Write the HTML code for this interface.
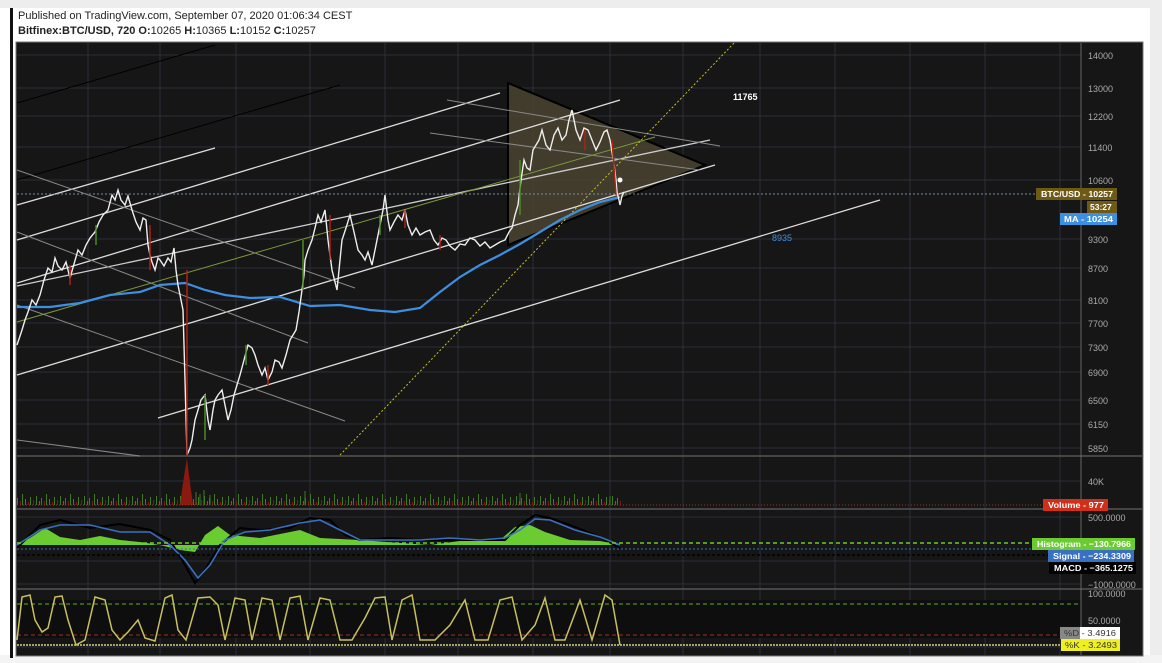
<!DOCTYPE html>
<html><head><meta charset="utf-8"><style>
html,body{margin:0;padding:0;background:#fff;width:1162px;height:663px;overflow:hidden;font-family:"Liberation Sans",sans-serif}
.h{position:absolute;left:18px;font-size:11px;color:#222}
</style></head><body>
<div style="position:absolute;left:0;top:0;width:1162px;height:8px;background:#ededed"></div>
<div style="position:absolute;left:1150px;top:0;width:12px;height:663px;background:#ededed"></div>
<div style="position:absolute;left:0;top:655px;width:1162px;height:8px;background:#f4f4f4"></div>
<div style="position:absolute;left:10px;top:8px;width:3px;height:650px;background:#111"></div>
<div class="h" style="top:10px">Published on TradingView.com, September 07, 2020 01:06:34 CEST</div>
<div class="h" style="top:25px;font-weight:bold">Bitfinex:BTC/USD, 720 <span>O:</span><span style="font-weight:normal">10265</span> H:<span style="font-weight:normal">10365</span> L:<span style="font-weight:normal">10152</span> C:<span style="font-weight:normal">10257</span></div>
<svg style="position:absolute;left:0;top:0" width="1162" height="663" font-family="Liberation Sans, sans-serif">
<defs>
<pattern id="vol" x="17" y="0" width="24" height="663" patternUnits="userSpaceOnUse">
<rect x="0" y="498" width="1" height="7" fill="#3f7a22"/><rect x="3" y="501" width="1" height="4" fill="#7a1a10"/><rect x="5" y="494" width="1" height="11" fill="#3f7a22"/><rect x="8" y="499" width="1" height="6" fill="#3f7a22"/><rect x="11" y="502" width="1" height="3" fill="#7a1a10"/><rect x="13" y="497" width="1" height="8" fill="#3f7a22"/><rect x="16" y="500" width="1" height="5" fill="#7a1a10"/><rect x="19" y="496" width="1" height="9" fill="#3f7a22"/><rect x="22" y="501" width="1" height="4" fill="#3f7a22"/>
</pattern>
</defs>
<rect x="16" y="42" width="1127" height="614" fill="#161616" stroke="#777" stroke-width="1"/>
<g stroke="#2a2f38" stroke-width="1">
<line x1="88" y1="43" x2="88" y2="655"/><line x1="160" y1="43" x2="160" y2="655"/><line x1="236" y1="43" x2="236" y2="655"/><line x1="310" y1="43" x2="310" y2="655"/><line x1="385" y1="43" x2="385" y2="655"/><line x1="458" y1="43" x2="458" y2="655"/><line x1="533" y1="43" x2="533" y2="655"/><line x1="610" y1="43" x2="610" y2="655"/><line x1="683" y1="43" x2="683" y2="655"/><line x1="760" y1="43" x2="760" y2="655"/><line x1="835" y1="43" x2="835" y2="655"/><line x1="910" y1="43" x2="910" y2="655"/><line x1="985" y1="43" x2="985" y2="655"/><line x1="1060" y1="43" x2="1060" y2="655"/>
<line x1="17" y1="55" x2="1081" y2="55"/><line x1="17" y1="88" x2="1081" y2="88"/><line x1="17" y1="116" x2="1081" y2="116"/><line x1="17" y1="147" x2="1081" y2="147"/><line x1="17" y1="180" x2="1081" y2="180"/><line x1="17" y1="239" x2="1081" y2="239"/><line x1="17" y1="268" x2="1081" y2="268"/><line x1="17" y1="300" x2="1081" y2="300"/><line x1="17" y1="323" x2="1081" y2="323"/><line x1="17" y1="347" x2="1081" y2="347"/><line x1="17" y1="372" x2="1081" y2="372"/><line x1="17" y1="400" x2="1081" y2="400"/><line x1="17" y1="424" x2="1081" y2="424"/><line x1="17" y1="448" x2="1081" y2="448"/>
<line x1="17" y1="481" x2="1081" y2="481"/><line x1="17" y1="517" x2="1081" y2="517"/><line x1="17" y1="561" x2="1081" y2="561"/><line x1="17" y1="584" x2="1081" y2="584"/><line x1="17" y1="620" x2="1081" y2="620"/><line x1="17" y1="647" x2="1081" y2="647"/>
</g>
<g stroke="#555" stroke-width="1.5"><line x1="17" y1="456" x2="1142" y2="456"/><line x1="17" y1="509" x2="1142" y2="509"/><line x1="17" y1="589" x2="1142" y2="589"/></g>
<rect x="17" y="600" width="1064" height="38" fill="#0e0e0e"/>
<line x1="1081" y1="43" x2="1081" y2="655" stroke="#666"/>
<polygon points="508,83 705,165 508,245" fill="#4a4330" fill-opacity="0.85" stroke="#000" stroke-width="2"/>
<g stroke="#000" stroke-width="1"><line x1="17" y1="103" x2="215" y2="45"/><line x1="17" y1="180" x2="340" y2="85"/></g>
<g stroke="#ddd" stroke-width="1.3" fill="none">
<line x1="17" y1="205" x2="215" y2="148"/><line x1="17" y1="240" x2="500" y2="93"/><line x1="17" y1="283" x2="620" y2="100"/><line x1="17" y1="375" x2="715" y2="165"/><line x1="158" y1="418" x2="880" y2="200"/><line x1="17" y1="286" x2="710" y2="140" stroke="#ccc"/>
</g>
<g stroke="#888" stroke-width="1"><line x1="17" y1="170" x2="355" y2="288"/><line x1="17" y1="232" x2="308" y2="343"/><line x1="17" y1="305" x2="345" y2="421"/><line x1="17" y1="440" x2="140" y2="456"/><line x1="447" y1="100" x2="720" y2="146"/><line x1="430" y1="133" x2="700" y2="170"/></g>
<line x1="17" y1="322" x2="655" y2="137" stroke="#7a9a3a" stroke-width="1"/>
<line x1="340" y1="455" x2="735" y2="42" stroke="#c8c020" stroke-width="1" stroke-dasharray="2,2"/>
<line x1="17" y1="194" x2="1081" y2="194" stroke="#7a8aa0" stroke-dasharray="2,2"/>
<polyline fill="none" stroke="#3d8fe0" stroke-width="2.2" points="17,307 50,307 80,303 110,295 140,292 160,285 185,283 205,290 225,295 250,298 280,297 310,306 340,305 370,310 395,312 420,308 440,292 460,277 480,265 500,255 520,244 540,232 560,220 580,210 600,202 620,197"/>
<polyline fill="none" stroke="#eee" stroke-width="1.4" points="17,345 22,330 25,320 28,312 32,300 36,305 40,295 44,280 48,268 52,272 55,258 58,266 62,270 66,262 70,278 74,264 78,250 82,255 86,245 90,238 95,232 99,222 103,215 108,210 112,195 115,200 118,190 121,200 125,205 128,196 132,210 136,222 140,230 143,218 146,220 148,245 150,255 152,262 155,270 158,258 160,260 164,266 168,258 171,262 174,248 176,270 178,285 181,300 183,310 185,380 187,455 190,448 192,440 195,420 198,410 201,400 205,395 208,420 210,430 213,410 215,400 218,395 222,390 225,405 228,420 231,410 234,395 237,385 240,375 244,360 248,345 252,348 255,355 258,365 262,375 265,368 268,380 272,372 275,360 279,362 282,368 286,355 290,340 293,335 296,330 299,312 302,290 304,275 305,260 308,250 312,240 315,228 318,215 321,222 325,210 328,240 332,270 335,282 337,290 340,260 342,240 346,228 350,215 354,232 358,250 362,255 365,260 368,252 372,265 376,245 380,225 383,210 385,195 388,220 390,230 394,222 398,215 402,220 405,210 408,225 412,235 416,228 420,235 425,232 430,230 434,240 438,245 442,238 446,240 450,246 455,250 460,244 465,245 470,238 475,240 480,246 485,242 490,248 495,245 500,242 505,240 509,232 512,228 515,215 518,205 521,180 524,160 527,168 530,170 533,150 536,145 539,140 542,130 546,145 550,150 554,135 558,128 562,140 566,135 569,120 572,110 576,130 580,140 584,128 588,130 592,140 596,150 600,142 604,132 607,130 610,140 612,152 614,165 616,180 617,192 619,200 620,205 622,196 624,192"/>
<g stroke="#b02010" stroke-width="1.5"><line x1="187" y1="270" x2="187" y2="456"/><line x1="150" y1="225" x2="150" y2="270"/><line x1="585" y1="130" x2="585" y2="150"/><line x1="612" y1="140" x2="616" y2="195"/><line x1="330" y1="215" x2="330" y2="260"/><line x1="440" y1="235" x2="440" y2="250"/><line x1="70" y1="265" x2="70" y2="285"/><line x1="268" y1="365" x2="268" y2="385"/><line x1="405" y1="210" x2="405" y2="228"/></g>
<g stroke="#4a8a20" stroke-width="1.5"><line x1="520" y1="160" x2="520" y2="215"/><line x1="303" y1="240" x2="303" y2="290"/><line x1="205" y1="395" x2="205" y2="440"/><line x1="96" y1="225" x2="96" y2="245"/><line x1="246" y1="345" x2="246" y2="365"/><line x1="380" y1="215" x2="380" y2="235"/></g>
<circle cx="620" cy="180" r="2.5" fill="#fff"/>
<text x="733" y="100" fill="#fff" font-size="9" font-weight="bold">11765</text>
<text x="772" y="241" fill="#3d8fe0" font-size="9">8935</text>
<rect x="17" y="490" width="605" height="15" fill="url(#vol)"/>
<path d="M180,505 L182,490 L185,470 L187,458 L189,475 L191,490 L193,505 Z" fill="#8a1a10"/>
<g stroke="#3f7a22" stroke-width="1"><line x1="196" y1="505" x2="196" y2="492"/><line x1="200" y1="505" x2="200" y2="494"/><line x1="204" y1="505" x2="204" y2="490"/><line x1="210" y1="505" x2="210" y2="495"/><line x1="305" y1="505" x2="305" y2="491"/><line x1="520" y1="505" x2="520" y2="493"/><line x1="610" y1="505" x2="610" y2="496"/></g>
<line x1="17" y1="505" x2="1081" y2="505" stroke="#a03020" stroke-dasharray="1,2"/>
<path d="M17,545 L30,538 L45,528 L60,537 L80,540 L100,536 L120,540 L140,542 L160,545 L180,550 L195,552 L205,535 L218,526 L230,535 L260,538 L300,530 L320,538 L360,540 L400,543 L430,545 L460,541 L500,540 L515,527 L530,525 L545,532 L570,540 L600,541 L620,545 Z" fill="#6acc30"/>
<polyline fill="none" stroke="#000" stroke-width="2" points="17,548 40,525 60,520 90,528 120,524 150,530 170,540 185,565 195,583 205,570 220,545 240,528 260,530 290,528 310,518 330,520 345,535 360,540 390,538 420,540 450,540 480,540 505,540 520,525 535,515 550,518 570,525 600,537 620,548"/>
<polyline fill="none" stroke="#3a70c0" stroke-width="1.6" points="17,545 40,530 60,525 90,525 120,532 150,532 170,545 185,560 198,578 210,565 225,540 245,532 270,530 300,523 320,520 340,530 360,540 390,540 420,540 450,538 480,540 505,538 520,530 535,519 550,520 575,530 600,537 620,545"/>
<line x1="17" y1="543" x2="1081" y2="543" stroke="#6acc30" stroke-width="1.5" stroke-dasharray="4,3"/>
<line x1="17" y1="549" x2="1081" y2="549" stroke="#3a70c0" stroke-dasharray="2,2"/>
<line x1="17" y1="555" x2="1081" y2="555" stroke="#000" stroke-width="1.5" stroke-dasharray="3,2"/>
<line x1="17" y1="604" x2="1081" y2="604" stroke="#5ab020" stroke-dasharray="4,3"/>
<line x1="17" y1="635" x2="1081" y2="635" stroke="#a03020" stroke-dasharray="4,3"/>
<line x1="17" y1="645" x2="1081" y2="645" stroke="#d8d080" stroke-width="1.5" stroke-dasharray="2,1"/>
<polyline fill="none" stroke="#c8c060" stroke-width="1.5" points="17,640 22,597 30,595 35,620 42,632 48,628 55,597 62,596 68,620 76,645 85,640 95,597 105,600 112,630 120,640 128,632 138,620 145,638 155,641 165,598 172,595 178,630 186,640 198,598 210,597 218,605 225,640 235,598 245,600 252,640 262,598 272,600 280,640 290,598 300,596 308,640 320,598 330,600 340,640 352,640 365,618 375,598 385,597 392,640 402,600 412,595 420,640 435,640 450,625 465,600 475,640 488,640 500,600 512,597 522,640 535,625 545,598 555,640 565,640 580,600 592,640 605,595 612,600 620,645"/>
<g fill="#aaa" font-size="9">
<text x="1088" y="59">14000</text><text x="1088" y="92">13000</text><text x="1088" y="120">12200</text><text x="1088" y="151">11400</text><text x="1088" y="184">10600</text><text x="1088" y="243">9300</text><text x="1088" y="272">8700</text><text x="1088" y="304">8100</text><text x="1088" y="327">7700</text><text x="1088" y="351">7300</text><text x="1088" y="376">6900</text><text x="1088" y="404">6500</text><text x="1088" y="428">6150</text><text x="1088" y="452">5850</text>
<text x="1088" y="485">40K</text><text x="1088" y="521">500.0000</text><text x="1088" y="588">−1000.0000</text><text x="1088" y="597">100.0000</text><text x="1088" y="624">50.0000</text>
</g>
<g font-size="8.5" font-weight="bold">
<rect x="1036" y="188" width="81" height="12" fill="#6e5a14"/><text x="1041" y="197" fill="#fff" textLength="72" lengthAdjust="spacingAndGlyphs">BTC/USD - 10257</text>
<rect x="1087" y="201" width="30" height="12" fill="#6e5a14"/><text x="1090" y="210" fill="#fff">53:27</text>
<rect x="1060" y="213" width="57" height="12" fill="#3d8fe0"/><text x="1064" y="222" fill="#fff" textLength="49" lengthAdjust="spacingAndGlyphs">MA - 10254</text>
<rect x="1043" y="499" width="65" height="12" fill="#d0301a"/><text x="1048" y="508" fill="#fff" textLength="56" lengthAdjust="spacingAndGlyphs">Volume - 977</text>
<rect x="1032" y="538" width="103" height="12" fill="#6acc30"/><text x="1037" y="547" fill="#fff" textLength="94" lengthAdjust="spacingAndGlyphs">Histogram - −130.7966</text>
<rect x="1048" y="550" width="86" height="12" fill="#3a70c0"/><text x="1053" y="559" fill="#fff" textLength="78" lengthAdjust="spacingAndGlyphs">Signal - −234.3309</text>
<rect x="1049" y="562" width="87" height="12" fill="#000"/><text x="1054" y="571" fill="#fff" textLength="79" lengthAdjust="spacingAndGlyphs">MACD - −365.1275</text>
<rect x="1060" y="627" width="60" height="12" fill="#fff"/><rect x="1060" y="627" width="20" height="12" fill="#888"/><text x="1064" y="636" fill="#333" font-weight="normal" textLength="52" lengthAdjust="spacingAndGlyphs">%D - 3.4916</text>
<rect x="1061" y="639" width="59" height="12" fill="#f0f020"/><text x="1065" y="648" fill="#333" font-weight="normal" textLength="52" lengthAdjust="spacingAndGlyphs">%K - 3.2493</text>
</g>
</svg>
</body></html>
